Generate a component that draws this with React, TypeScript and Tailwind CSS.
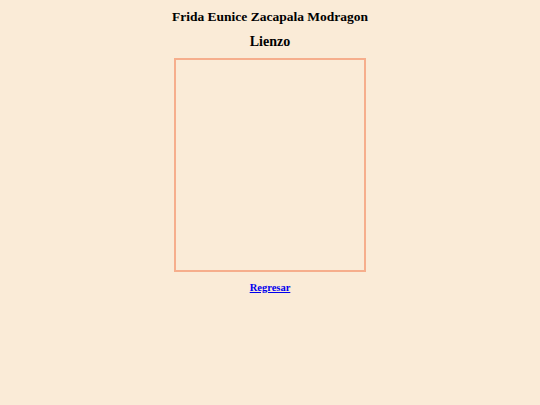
import React from 'react';

export default function App() {
  return (
    <div className="min-h-[405px] bg-[#faebd7] flex flex-col items-center pt-[6px] font-['Liberation_Serif',serif] text-black">
      <h1 className="text-[13.5px] leading-[22px] font-bold">Frida Eunice Zacapala Modragon</h1>
      <h2 className="mt-[3px] text-[14px] leading-[22px] font-bold">Lienzo</h2>
      <div className="mt-[5px] w-[192px] h-[214px] border-2 border-[#f6ae8c]" />
      <a href="#" className="mt-[8px] text-[10.5px] font-bold text-[#0000ee] underline">
        Regresar
      </a>
    </div>
  );
}
